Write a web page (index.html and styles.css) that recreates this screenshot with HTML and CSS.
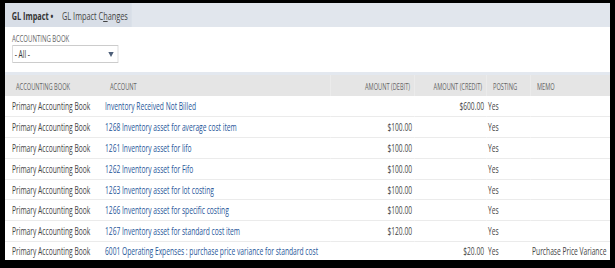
FILE: index.html
```html
<!DOCTYPE html>
<html lang="en">
<head>
  <meta charset="UTF-8" />
  <title>GL Impact</title>
  <link rel="stylesheet" href="styles.css">
</head>
<body>

<div class="frame">
  <div class="page">
    <div class="panel">

      <div class="tabbar">
        <div class="tabs">
          <span class="tab active">GL Impact &bull;</span>
          <span class="tab">GL Impact C<u>h</u>anges</span>
        </div>
      </div>

      <div class="filter">
        <label for="bookSelect">Accounting Book</label>
        <div class="select" id="bookSelect">
          <span>- All -</span>
          <span class="arrow"></span>
        </div>
      </div>

      <table id="glImpact">
        <colgroup>
          <col class="c-book">
          <col class="c-account">
          <col class="c-debit">
          <col class="c-credit">
          <col class="c-posting">
          <col class="c-memo">
        </colgroup>
        <thead>
          <tr>
            <th>Accounting Book</th>
            <th>Account</th>
            <th class="num">Amount (Debit)</th>
            <th class="num">Amount (Credit)</th>
            <th>Posting</th>
            <th>Memo</th>
          </tr>
        </thead>
        <tbody>
          <tr>
            <td>Primary Accounting Book</td>
            <td><a href="#">Inventory Received Not Billed</a></td>
            <td class="num"></td>
            <td class="num">$600.00</td>
            <td>Yes</td>
            <td></td>
          </tr>
          <tr>
            <td>Primary Accounting Book</td>
            <td><a href="#">1268 Inventory asset for average cost item</a></td>
            <td class="num">$100.00</td>
            <td class="num"></td>
            <td>Yes</td>
            <td></td>
          </tr>
          <tr>
            <td>Primary Accounting Book</td>
            <td><a href="#">1261 Inventory asset for lifo</a></td>
            <td class="num">$100.00</td>
            <td class="num"></td>
            <td>Yes</td>
            <td></td>
          </tr>
          <tr>
            <td>Primary Accounting Book</td>
            <td><a href="#">1262 Inventory asset for Fifo</a></td>
            <td class="num">$100.00</td>
            <td class="num"></td>
            <td>Yes</td>
            <td></td>
          </tr>
          <tr>
            <td>Primary Accounting Book</td>
            <td><a href="#">1263 Inventory asset for lot costing</a></td>
            <td class="num">$100.00</td>
            <td class="num"></td>
            <td>Yes</td>
            <td></td>
          </tr>
          <tr>
            <td>Primary Accounting Book</td>
            <td><a href="#">1266 Inventory asset for specific costing</a></td>
            <td class="num">$100.00</td>
            <td class="num"></td>
            <td>Yes</td>
            <td></td>
          </tr>
          <tr>
            <td>Primary Accounting Book</td>
            <td><a href="#">1267 Inventory asset for standard cost item</a></td>
            <td class="num">$120.00</td>
            <td class="num"></td>
            <td>Yes</td>
            <td></td>
          </tr>
          <tr class="last">
            <td>Primary Accounting Book</td>
            <td><a href="#">6001 Operating Expenses : purchase price variance for standard cost</a></td>
            <td class="num"></td>
            <td class="num">$20.00</td>
            <td>Yes</td>
            <td>Purchase Price Variance</td>
          </tr>
        </tbody>
      </table>

    </div>
  </div>
</div>

</body>
</html>
```

FILE: styles.css
```css
html, body {
  margin: 0;
  height: 268px;
  overflow: hidden;
  background: #000;
}
body {
  font-family: 'Open Sans', 'Liberation Sans', sans-serif;
  color: #444;
}

/* the capture is squeezed sideways, so the page is laid out wide and scaled */
.frame {
  width: 605px;
  margin-left: 5px;
  padding-top: 3px;
  overflow: hidden;
}
.page {
  width: 907.5px;
  transform: scaleX(0.6667);
  transform-origin: 0 0;
}
.panel {
  background: #fff;
  height: 257px;
  overflow: hidden;
}

/* tabs */
.tabbar {
  height: 24px;
  background: #e1e6ed;
  border-bottom: 1px solid #fff;
  display: flex;
}
.tabs {
  display: flex;
  align-items: center;
  gap: 13px;
  padding: 0 10px;
  width: 190px;
  box-sizing: border-box;
  background: #d8dee7;
}
.tab {
  font-size: 11px;
  color: #444;
  white-space: nowrap;
}
.tab.active {
  font-weight: 700;
  color: #333;
}

/* filter */
.filter {
  padding: 5px 10.5px 0;
  height: 39px;
  border-bottom: 3px solid #e3e8ef;
}
.filter label {
  display: block;
  font-size: 9px;
  line-height: 11px;
  text-transform: uppercase;
  color: #666;
}
.select {
  margin-top: 1px;
  width: 159px;
  height: 18px;
  box-sizing: border-box;
  border: 1px solid #ccc;
  display: flex;
  align-items: center;
  justify-content: space-between;
  padding: 0 6px 0 3px;
  font-size: 10px;
  color: #333;
}
.arrow {
  width: 0;
  height: 0;
  border-left: 4px solid transparent;
  border-right: 4px solid transparent;
  border-top: 5px solid #4d5f79;
}

/* table */
#glImpact {
  width: 907.5px;
  table-layout: fixed;
  border-collapse: collapse;
}
.c-book { width: 147px; }
.c-account { width: 340.5px; }
.c-debit { width: 126px; }
.c-credit { width: 108px; }
.c-posting { width: 66px; }
.c-memo { width: 120px; }

#glImpact th {
  height: 19px;
  padding: 2px 6px 0 10.5px;
  background: #e5e5e5;
  font-size: 8.5px;
  font-weight: 400;
  text-transform: uppercase;
  color: #666;
  text-align: left;
  white-space: nowrap;
}
#glImpact th:first-child {
  padding-left: 16.5px;
}
#glImpact td {
  height: 20.8px;
  box-sizing: border-box;
  padding: 0 3px;
  border-bottom: 1px solid #ebebeb;
  font-size: 10px;
  color: #444;
  white-space: nowrap;
  overflow: hidden;
}
#glImpact td:first-child {
  padding-left: 10.5px;
}
#glImpact .last td {
  height: 18.4px;
  border-bottom: none;
}
#glImpact .num {
  text-align: right;
}
#glImpact a {
  color: #255599;
  text-decoration: none;
}
```
